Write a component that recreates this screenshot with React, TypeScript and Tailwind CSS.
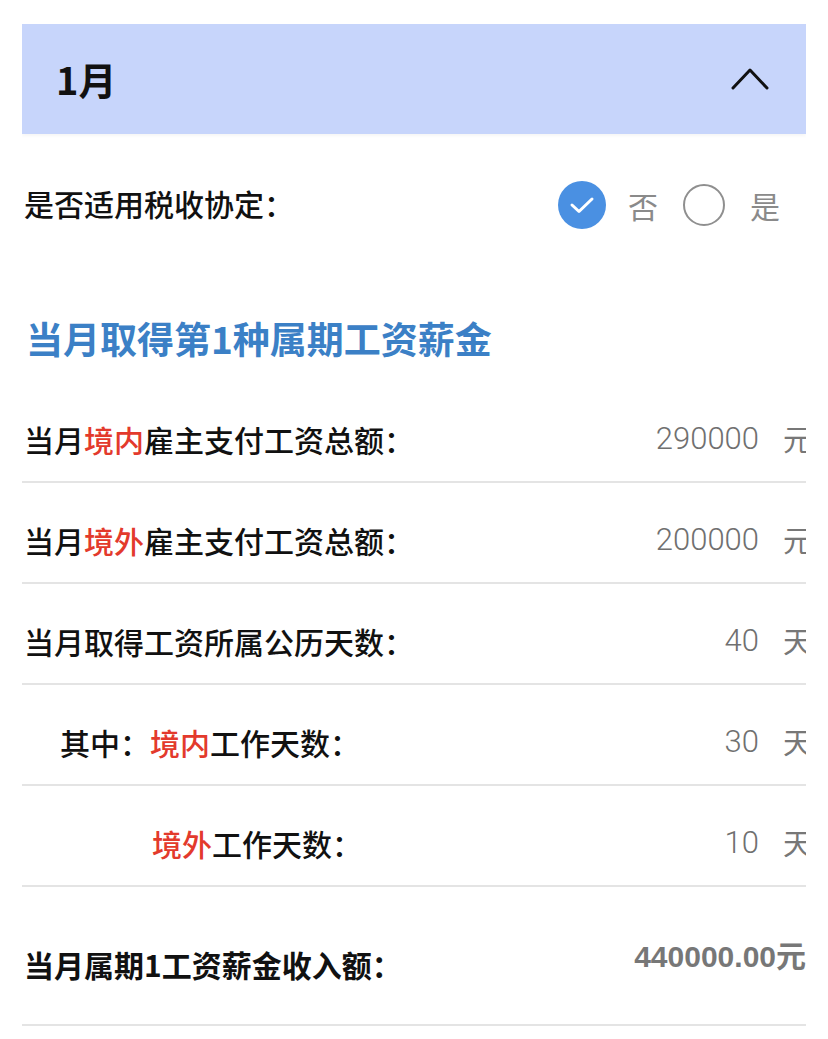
const cjk = "font-['Noto_Sans_CJK_SC','Noto_Sans',sans-serif]";

type Row = {
  indent?: string;
  parts: { text: string; red?: boolean }[];
  value: string;
  unit: string;
};

const rows: Row[] = [
  {
    parts: [{ text: "当月" }, { text: "境内", red: true }, { text: "雇主支付工资总额：" }],
    value: "290000",
    unit: "元",
  },
  {
    parts: [{ text: "当月" }, { text: "境外", red: true }, { text: "雇主支付工资总额：" }],
    value: "200000",
    unit: "元",
  },
  {
    parts: [{ text: "当月取得工资所属公历天数：" }],
    value: "40",
    unit: "天",
  },
  {
    indent: "pl-[36px]",
    parts: [{ text: "其中：" }, { text: "境内", red: true }, { text: "工作天数：" }],
    value: "30",
    unit: "天",
  },
  {
    indent: "pl-[128px]",
    parts: [{ text: "境外", red: true }, { text: "工作天数：" }],
    value: "10",
    unit: "天",
  },
];

const App = () => {
  return (
    <div className={`min-h-screen bg-white ${cjk}`}>
      <div className="mx-[22px] pt-[24px] overflow-hidden">
        <div className="h-[110px] bg-[#c7d5fb] flex items-center justify-between pl-[34px] pr-[36px] shadow-[0_2px_3px_rgba(0,0,0,0.04)]">
          <span className="text-[38px] font-bold text-[#111] leading-none">1月</span>
          <svg width="40" height="26" viewBox="0 0 40 26" fill="none">
            <path d="M3 22 L20 4 L37 22" stroke="#111" strokeWidth="3" strokeLinecap="round" strokeLinejoin="round" />
          </svg>
        </div>

        <div className="h-[138px] flex items-center justify-between pl-[2px]">
          <span className="text-[30px] font-medium text-[#111] leading-none">是否适用税收协定：</span>
          <div className="flex items-center pr-[26px] pt-[4px]">
            <span className="w-[48px] h-[48px] rounded-full bg-[#4a90e2] flex items-center justify-center">
              <svg width="26" height="20" viewBox="0 0 26 20" fill="none">
                <path d="M3 10 L10 16.5 L23 4" stroke="#fff" strokeWidth="3" strokeLinecap="round" strokeLinejoin="round" />
              </svg>
            </span>
            <span className="ml-[22px] text-[30px] text-[#8a8a8a] leading-none">否</span>
            <span className="ml-[25px] w-[42px] h-[42px] rounded-full border-2 border-[#8f8f8f]" />
            <span className="ml-[25px] text-[30px] text-[#8a8a8a] leading-none">是</span>
          </div>
        </div>

        <div className="h-[110px] pt-[48px] pl-[4px]">
          <h2 className="text-[37px] leading-[36px] font-bold text-[#3b80c6]">当月取得第1种属期工资薪金</h2>
        </div>

        {rows.map((row, i) => (
          <div
            key={i}
            className={`h-[101px] pt-[14px] border-b-2 border-[#e4e4e4] flex items-center justify-between ${row.indent ?? ""}`}
          >
            <span className="text-[30px] font-medium text-[#111] leading-none pl-[2px] whitespace-nowrap">
              {row.parts.map((p, j) => (
                <span key={j} className={p.red ? "text-[#e33a2c]" : ""}>
                  {p.text}
                </span>
              ))}
            </span>
            <span className="flex items-center whitespace-nowrap mr-[-6px]">
              <span className="font-['Roboto','Liberation_Sans',sans-serif] font-light text-[31px] text-[#707070] leading-none">
                {row.value}
              </span>
              <span className="ml-[24px] text-[29px] text-[#777] leading-none">{row.unit}</span>
            </span>
          </div>
        ))}

        <div className="h-[139px] border-b-2 border-[#e4e4e4] flex items-center justify-between pt-[6px]">
          <span className="text-[30px] font-bold text-[#111] leading-none pl-[2px] pt-[10px]">当月属期1工资薪金收入额：</span>
          <span className="flex items-baseline font-bold text-[#777] leading-none pb-[6px]">
            <span className="font-['Liberation_Sans',sans-serif] text-[30px]">440000.00</span>
            <span className="text-[30px]">元</span>
          </span>
        </div>
      </div>
    </div>
  );
};

export default App;
